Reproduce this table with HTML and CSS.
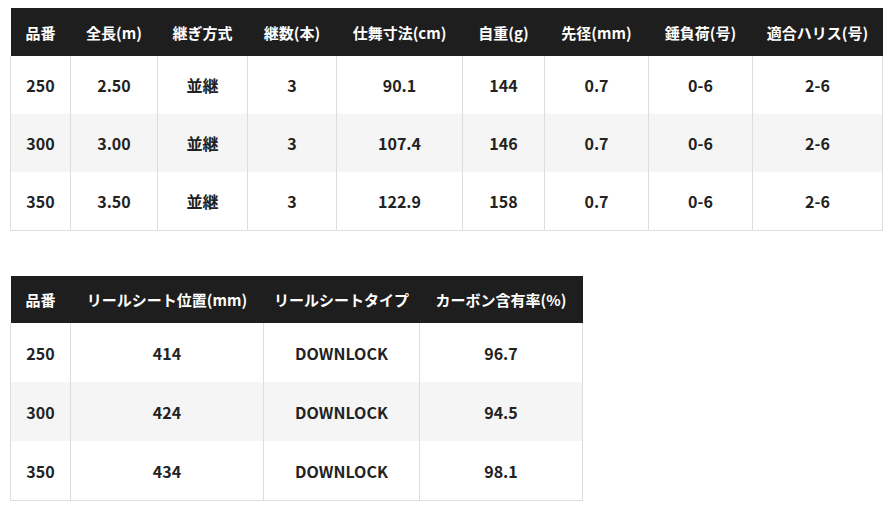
FILE: index.html
```html
<!DOCTYPE html>
<html lang="ja">
<head>
<meta charset="utf-8">
<link rel="stylesheet" href="styles.css">
</head>
<body>
<div class="page">
  <table class="spec spec-main">
    <colgroup>
      <col style="width:60px"><col style="width:87px"><col style="width:90px"><col style="width:89px"><col style="width:126px"><col style="width:82px"><col style="width:104px"><col style="width:104px"><col style="width:130px">
    </colgroup>
    <thead>
      <tr><th>品番</th><th>全長(m)</th><th>継ぎ方式</th><th>継数(本)</th><th>仕舞寸法(cm)</th><th>自重(g)</th><th>先径(mm)</th><th>錘負荷(号)</th><th>適合ハリス(号)</th></tr>
    </thead>
    <tbody>
      <tr><td>250</td><td>2.50</td><td>並継</td><td>3</td><td>90.1</td><td>144</td><td>0.7</td><td>0-6</td><td>2-6</td></tr>
      <tr><td>300</td><td>3.00</td><td>並継</td><td>3</td><td>107.4</td><td>146</td><td>0.7</td><td>0-6</td><td>2-6</td></tr>
      <tr><td>350</td><td>3.50</td><td>並継</td><td>3</td><td>122.9</td><td>158</td><td>0.7</td><td>0-6</td><td>2-6</td></tr>
    </tbody>
  </table>
  <table class="spec spec-sub">
    <colgroup>
      <col style="width:60px"><col style="width:193px"><col style="width:156px"><col style="width:163px">
    </colgroup>
    <thead>
      <tr><th>品番</th><th>リールシート位置(mm)</th><th>リールシートタイプ</th><th>カーボン含有率(%)</th></tr>
    </thead>
    <tbody>
      <tr><td>250</td><td>414</td><td>DOWNLOCK</td><td>96.7</td></tr>
      <tr><td>300</td><td>424</td><td>DOWNLOCK</td><td>94.5</td></tr>
      <tr><td>350</td><td>434</td><td>DOWNLOCK</td><td>98.1</td></tr>
    </tbody>
  </table>
</div>
</body>
</html>
```
FILE: styles.css
```css
html, body {
  margin: 0;
  padding: 0;
  background: #ffffff;
}
.page {
  padding: 8px 0 0 10px;
  display: flex;
  flex-direction: column;
  align-items: flex-start;
  gap: 45px;
  font-family: "Noto Sans CJK JP", "Noto Sans", sans-serif;
}
.spec {
  border-collapse: collapse;
  table-layout: fixed;
}
.spec-main { width: 872px; }
.spec-sub { width: 572px; }
.spec th {
  background: #1e1e1e;
  color: #ffffff;
  font-size: 15px;
  font-weight: 700;
  height: 48px;
  padding: 0;
  text-align: center;
  vertical-align: middle;
  white-space: nowrap;
}
.spec-sub th { height: 47px; }
.spec td {
  color: #222222;
  font-size: 16px;
  font-weight: 700;
  height: 58px;
  padding: 0;
  text-align: center;
  vertical-align: middle;
  border-left: 1px solid #dddddd;
  border-right: 1px solid #dddddd;
}
.spec-sub td { height: 59px; }
.spec tbody tr:nth-child(2) td { background: #f5f5f5; }
.spec tbody tr:last-child td { border-bottom: 1px solid #dddddd; }
```
